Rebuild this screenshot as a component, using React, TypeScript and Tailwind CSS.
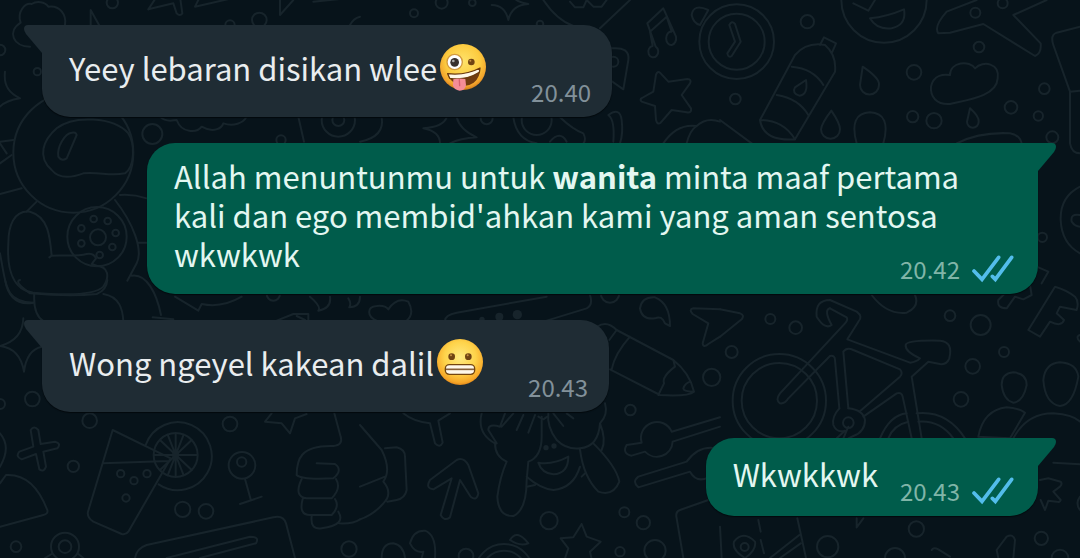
import type { ReactNode } from "react";

interface Message {
    id: number;
    text: ReactNode;
    time: string;
    outgoing?: boolean;
    multiline?: boolean;
    emoji?: "zany" | "grimace";
}

const messages: Message[] = [
    { id: 1, text: "Yeey lebaran disikan wlee", time: "20.40", emoji: "zany" },
    {
        id: 2,
        text: (
            <>
                Allah menuntunmu untuk <strong className="font-bold">wanita</strong> minta maaf pertama kali dan ego
                membid'ahkan kami yang aman sentosa wkwkwk
            </>
        ),
        time: "20.42",
        outgoing: true,
        multiline: true,
    },
    { id: 3, text: "Wong ngeyel kakean dalil", time: "20.43", emoji: "grimace" },
    { id: 4, text: "Wkwkkwk", time: "20.43", outgoing: true },
];

// Wallpaper is split in six tiles, each with its own origin
interface Tile {
    x: number;
    y: number;
    circles: [number, number, number][];
    paths: string[];
}

const tiles: Tile[] = [
    {
        x: 0,
        y: 0,
        circles: [
            [337, 8, 17], [778, 60, 22], [690, 75, 14], [0, 150, 16], [112, 215, 11], [220, 458, 180],
            [457, 402, 30], [1015, 360, 50], [1015, 360, 18], [843, 420, 14], [291, 710, 89], [294, 712, 24],
            [281, 657, 10], [323, 663, 10], [347, 699, 10], [337, 741, 10], [299, 765, 10], [244, 730, 10], [244, 685, 10],
        ],
        paths: [
            "M90 140C40 140 20 95 62 68C50 35 75 8 95 12C110 2 135 5 145 20C180 15 200 45 195 75",
            "M272 80V30L300 80M445 28L470-10M445 28L520 10L530 40Q540 50 547 40L540-10M600-10L585 20L695-5",
            "M840 0V45L880 0M940 5L1040-5M1050 75Q1060 55 1080 50M15 215C10 260 30 280 60 295C30 300 10 310 0 320",
            "M155 510C110 470 130 420 170 385C220 345 340 350 385 400C405 430 405 500 375 520C330 530 300 515 250 520C210 535 175 535 155 510Z",
            "M230 405L200 475Q185 485 175 470C170 440 195 400 215 398Q228 395 230 405Z",
            "M0 425L40 420M0 490L35 465M0 430L20 460M0 582L65 565",
            "M480 350C500 370 520 360 530 360C545 400 590 400 605 380C640 400 665 385 670 370C700 380 730 370 740 350M895 350L912 425",
            "M155 767C150 710 145 650 90 635C40 630 25 680 25 730C20 810 40 870 100 878C180 885 280 890 310 860C330 830 325 800 290 797L275 792L288 775Q280 758 260 762C230 770 190 765 155 767L148 772",
            "M110 605L80 635M345 600C400 670 430 750 410 790L382 842M360 585Q400 582 440 595M415 728H440M395 827C440 820 470 880 483 945M458 952L520 958",
            "M0 760C20 870 20 905 100 908M103 878C100 920 110 950 130 963M310 882C360 890 368 930 370 963",
        ],
    },
    {
        x: 1080,
        y: 0,
        circles: [[162, 40, 12], [245, 8, 18], [337, 8, 10], [540, 72, 10], [760, 185, 15], [380, 355, 18], [530, 360, 45]],
        paths: [
            "M395 15Q435 15 445 60Q455 15 505 12Q460 5 455-20M550 0Q590 60 640 78M810 0L720 85M630 5L645 22H670L680 0L700 20H725L740 0",
            "M910 25L862 70L887 140A15 17 0 1 1 878 138L870 95L920 50L935 95A15 20 0 1 0 948 110Z",
            "M1020 75L1045 30Q1000 10 995 45Q1000 70 1020 75M755 145Q810 140 805 180L790 268L750 240",
            "M900 218L925 245L982 237Q996 238 990 250L965 285L993 325Q996 340 980 337L935 330L902 368Q892 376 888 360L885 318L845 305Q838 298 846 294L880 275L888 224Q893 212 900 218Z",
            "M65 352Q75 410 0 425M190 385Q250 380 260 352M290 352Q300 390 350 412Q300 415 270 430M190 385Q240 395 240 430",
            "M460 352Q470 420 530 430M600 352Q640 390 670 400Q680 420 670 430M570 425Q600 390 620 425",
            "M745 345Q780 320 785 360Q790 400 780 430M745 345Q765 360 760 425M910 430Q950 370 1010 378Q1040 350 1080 365M980 430Q990 390 1010 378",
        ],
    },
    {
        x: 2160,
        y: 0,
        circles: [
            [50, 125, 112], [50, 125, 84], [262, 65, 20], [46, 297, 16], [582, 217, 22], [578, 350, 17], [642, 362, 23],
            [873, 322, 19], [973, 266, 16], [955, 348, 14], [997, 412, 18], [777, 141, 16], [766, 38, 15], [848, 10, 15],
            [967, 712, 14], [492, 0, 128],
        ],
        paths: [
            "M28 75Q35 60 45 72L62 125L35 168Q25 175 22 160L45 125Z",
            "M450 55Q500 50 552 28Q560 75 515 85Q470 90 450 55ZM400 10L445 32L465 0",
            "M120 360L225 165Q260 125 315 135Q350 165 345 215L225 418Q130 425 120 360Q190 360 225 418M300 135L312 112L348 130L335 160",
            "M215 200Q280 205 310 255M170 285Q235 295 265 345M258 240Q265 285 238 287Q215 280 225 262Z",
            "M428 200Q480 235 477 255A28 28 0 0 1 420 255ZM334 332Q360 370 360 388A28 28 0 0 1 303 388Q305 370 334 332ZM750 325Q778 350 776 365A17 18 0 0 1 741 365Z",
            "M410 430Q385 340 450 337Q515 340 490 430M0 360L95 430M710 430Q780 395 870 400Q900 405 905 430",
            "M690 225C690 185 750 180 765 205C790 180 840 190 833 235C830 290 740 300 690 312C650 315 630 290 633 260C640 225 670 222 690 225Z",
            "M770 0L680 35Q640 80 655 100L690 98L790 72L945 168Q965 160 962 130L880 45L980 0",
            "M1080 80L1010 98Q990 105 1000 135L1050 275V430Q1055 460 1080 460M1050 275L1080 272",
            "M1080 560Q1020 590 1022 660Q1025 730 1080 760M1080 645Q1050 640 1055 665Q1065 680 1080 680M950 800L985 815L965 850",
        ],
    },
    {
        x: 0,
        y: 840,
        circles: [
            [0, 372, 15], [97, 357, 22], [269, 422, 22], [220, 559, 17], [690, 432, 22], [527, 525, 66],
            [527, 525, 8], [362, 581, 11], [441, 581, 11], [402, 602, 11], [378, 654, 11], [726, 556, 40], [725, 546, 14],
            [548, 688, 23], [618, 694, 22], [48, 800, 16], [195, 800, 42], [195, 800, 19], [1047, 807, 23], [820, 42, 20],
        ],
        paths: [
            "M70 115Q68 180 0 198Q60 205 72 275Q80 210 125 200M92 450Q102 435 115 450L122 492L165 485Q185 490 172 505L130 515L138 560Q132 578 118 568L108 522L65 538Q45 530 58 515L100 500Z",
            "M0 460Q35 500 0 560M0 610L18 585Q100 580 142 690Q145 702 130 705L0 740",
            "M338 450L512 535L385 755Q378 765 365 762L280 725Q260 712 264 695ZM308 550L508 543M437 495A102 102 0 1 1 476 613",
            "M527 460V590M462 525H592M480 480L575 570M480 570L575 480M503 464L551 586M551 464L503 586",
            "M735 597L752 658M720 672L785 650M135 834L155 822M235 822L250 834",
            "M405 834Q410 805 440 795L820 712Q850 705 858 730L885 834M500 834L750 770Q780 770 768 790L600 834",
            "M795 425L815 400M795 425L845 430L870 460L885 415L920 402M1003 400L1022 470Q1030 495 1000 498C900 495 890 540 890 585Q905 600 1000 595Q1030 570 1005 552L950 550",
            "M905 597Q880 650 920 655H995Q1025 625 1008 597M908 657Q895 705 930 705H995Q1020 680 1005 657M935 708Q930 750 965 745Q1040 735 1015 695M1018 730Q1060 732 1080 718",
            "M525 50L595 92L605 72Q665 85 725 50M930 50Q965 80 955 92Q995 85 990 50M1045 55Q1055 70 1048 82Q1080 80 1080 50M830 122L880 102H925V122M890 108L915 120",
            "M60 0Q40 5 90 40Q210 50 290 42Q320 30 322 0M15 0Q30 80 100 68",
        ],
    },
    {
        x: 1080,
        y: 840,
        circles: [
            [750, 40, 28], [1055, 292, 26], [811, 390, 16], [567, 722, 26], [793, 697, 15], [850, 728, 20], [780, 815, 14],
            [885, 812, 32], [432, 880, 88], [432, 880, 68], [318, 828, 22],
        ],
        paths: [
            "M50 122C20 110 20 80 50 78Q75 75 85 88Q110 50 145 65Q165 100 140 122M255 122Q255 105 290 98L560 50M690 45Q700 75 680 85L560 122",
            "M930 138Q930 70 885 52Q845 50 840 85Q845 120 885 115Q905 105 915 130Z",
            "M1080 88L1000 85Q985 88 998 102L1045 130L1028 190Q1030 205 1045 192L1080 170",
            "M712 140Q740 120 770 150L940 240Q990 280 1002 335Q985 350 900 345L750 268M770 150L748 180M810 170Q765 220 755 268M940 240L945 260Q905 290 912 310L895 345M1000 335Q970 335 970 325Q975 310 990 305",
            "M800 495Q785 520 815 527L855 515A48 48 0 0 0 938 485L1080 440M800 495L845 488A48 48 0 0 1 935 455L1080 412",
            "M1080 508Q1020 490 980 545L835 590Q815 605 835 622L990 575Q1010 610 1045 592M1045 660L960 690Q945 695 950 715L970 834",
            "M0 435L65 510Q95 570 70 605Q100 640 70 670Q40 705 0 718M0 620L75 590M75 505L110 502Q135 508 135 530L140 630Q135 655 110 660L82 665",
            "M130 400Q160 425 210 430L225 490Q240 505 248 488L235 422L270 400",
            "M290 540L210 600Q195 625 220 628L275 595L242 705Q252 725 270 712L300 600L332 650Q350 665 355 640L325 555Q310 530 290 540Z",
            "M365 400Q350 460 405 490Q405 530 440 545Q420 590 412 650Q415 710 460 708Q500 690 500 600L505 545Q545 530 545 470V410M410 490L385 450Q385 430 420 440L435 400M425 440L460 400M470 450L490 405M505 458L525 405",
            "M565 400Q560 440 590 480Q620 510 660 505Q715 500 720 430Q745 405 735 370M720 430Q740 480 725 510M660 508Q670 590 715 635Q760 650 778 605Q770 560 700 490",
            "M535 548Q580 555 625 530Q625 580 580 583Q545 580 535 548ZM500 590Q540 625 580 630Q640 625 660 560M500 620L525 615M665 590L675 580M580 400L610 438M620 400L640 415M535 410L550 418L562 410",
            "M450 780Q470 745 505 790Q480 800 450 780M65 834Q65 790 100 790Q130 795 135 834M150 790Q160 750 195 752Q230 765 225 834M150 790Q165 820 190 815L185 834",
            "M665 732L680 770L722 785L690 815L700 860M665 732L640 772L602 775L625 805L610 850",
        ],
    },
    {
        x: 2160,
        y: 840,
        circles: [
            [151, 117, 15], [227, 143, 19], [35, 216, 18], [690, 107, 16], [782, 135, 30], [852, 216, 15], [758, 259, 22],
            [723, 358, 22], [178, 362, 140], [178, 362, 113], [385, 428, 16], [589, 747, 23],
            [323, 800, 32], [964, 775, 20], [74, 801, 12], [525, 834, 30], [1020, 834, 25],
        ],
        paths: [
            "M0 88L60 100Q75 105 65 118L0 170M455 45Q500 105 560 98Q600 80 585 45",
            "M330 85Q310 90 335 135Q315 150 290 110Q285 60 330 60L410 95Q430 110 415 125L382 178L570 248Q590 245 600 235Q555 215 557 195Q560 180 660 182Q700 185 688 235Q680 255 660 252L625 245L575 290L605 475",
            "M330 85L380 112Q385 120 375 130L180 340Q165 360 180 370Q195 372 205 355L330 228Q345 225 345 240L358 385M370 215L385 385M370 215Q380 200 400 210L540 268Q550 280 540 290L418 395M430 410L530 340Q545 335 548 350L575 475",
            "M358 385Q335 410 340 435Q350 460 375 452L350 475M385 385Q430 390 435 420Q435 455 400 468L385 475M385 440L370 475",
            "M480 475Q510 405 560 400M505 475Q520 435 565 425M590 400Q680 390 735 475M595 425Q660 420 700 475",
            "M1005 20Q1040 30 1065 50Q1078 65 1070 90L1020 80L1010 100L1032 120Q1025 142 990 125L960 170L925 150ZM895 0L835 60Q830 85 860 85L885 50L910 58L935 45L930 15M1080 165Q1065 170 1080 185",
            "M880 277Q920 280 920 315Q910 365 880 368Q850 360 845 315Q845 280 880 277ZM1020 247Q1070 250 1075 290Q1060 375 1020 378Q975 370 970 300Q975 250 1020 247Z",
            "M775 470Q790 390 860 382Q900 385 915 398L870 475ZM880 475Q920 400 1000 400Q1060 405 1080 425M1000 548L1080 553",
            "M960 600L985 595L1022 605Q1028 612 1020 620L1000 635L1022 660Q1020 668 1010 665L985 662L975 690L962 660M1080 650Q1065 670 1080 690",
            "M115 720L122 755M122 780L132 820M232 715L258 834M150 834L238 765M180 834L242 790M410 742V715M410 742L430 715M75 834Q35 810 42 785Q70 750 105 785Q110 810 75 834",
            "M635 810Q640 800 655 808L690 830M835 834L830 810L860 770Q880 760 885 780L880 834M0 740L5 834",
        ],
    },
];

function Wallpaper() {
    return (
        <svg
            aria-hidden="true"
            viewBox="0 0 3240 1674"
            preserveAspectRatio="xMidYMid slice"
            className="pointer-events-none absolute inset-0 h-full w-full fill-none stroke-[#17242b] stroke-6"
            strokeLinecap="round"
            strokeLinejoin="round"
        >
            {tiles.map((tile) => (
                <g key={`${tile.x}-${tile.y}`} transform={`translate(${tile.x} ${tile.y})`}>
                    {tile.circles.map(([cx, cy, r]) => (
                        <circle key={`${cx}-${cy}-${r}`} cx={cx} cy={cy} r={r} />
                    ))}
                    {tile.paths.map((d) => (
                        <path key={d} d={d} />
                    ))}
                </g>
            ))}
            <g className="fill-[#17242b]" stroke="none">
                <circle cx="1552" cy="944" r="14" />
                <circle cx="1498" cy="950" r="12" />
                <circle cx="1446" cy="958" r="8" />
                <circle cx="1638" cy="1343" r="8" />
                <circle cx="1662" cy="1338" r="8" />
            </g>
        </svg>
    );
}

function ZanyFace() {
    return (
        <svg role="img" aria-label="zany face" viewBox="0 0 144 144" className="ml-0.5 size-12 shrink-0">
            <defs>
                <radialGradient id="zany-skin" cx="0.5" cy="0.38" r="0.62">
                    <stop offset="0" stopColor="#ffe36b" />
                    <stop offset="0.6" stopColor="#fccb3f" />
                    <stop offset="0.88" stopColor="#f2a22b" />
                    <stop offset="1" stopColor="#cf7a1b" />
                </radialGradient>
            </defs>
            <circle cx="72" cy="72" r="69" fill="url(#zany-skin)" />
            <circle cx="47" cy="57" r="23" fill="#fff" stroke="#d39a3e" strokeWidth="4" />
            <circle cx="47" cy="58" r="13" fill="#38312f" />
            <circle cx="43" cy="54" r="4" fill="#aaa" />
            <circle cx="97" cy="57" r="10" fill="#704313" />
            <circle cx="94" cy="53" r="3" fill="#c79042" />
            <path d="M26 92Q80 98 123 75Q124 104 104 119Q75 139 46 119Q31 110 26 92Z" fill="#713b10" />
            <path d="M26 92Q80 98 123 75L121 88Q80 114 32 106Z" fill="#fff8ea" stroke="#6b3a0e" strokeWidth="4" strokeLinejoin="round" />
            <path d="M43 109Q60 104 79 108L81 126Q79 143 62 143Q45 142 42 127Z" fill="#f58d97" />
            <path d="M61 110L62 128" stroke="#d9606f" strokeWidth="4" strokeLinecap="round" />
        </svg>
    );
}

function GrimaceFace() {
    return (
        <svg role="img" aria-label="grimacing face" viewBox="0 0 144 144" className="ml-0.5 size-12 shrink-0">
            <defs>
                <radialGradient id="grimace-skin" cx="0.5" cy="0.4" r="0.62">
                    <stop offset="0" stopColor="#ffea82" />
                    <stop offset="0.55" stopColor="#fed34a" />
                    <stop offset="0.88" stopColor="#f7a728" />
                    <stop offset="1" stopColor="#d97e17" />
                </radialGradient>
            </defs>
            <circle cx="72" cy="72" r="69" fill="url(#grimace-skin)" />
            <circle cx="47" cy="56" r="10" fill="#704313" />
            <circle cx="97" cy="56" r="10" fill="#704313" />
            <circle cx="45" cy="52" r="3" fill="#c79042" />
            <circle cx="95" cy="52" r="3" fill="#c79042" />
            <rect x="28" y="80" width="88" height="29" rx="12" fill="#fff8ea" stroke="#74450f" strokeWidth="4" />
            <path d="M30 94H114" stroke="#87613b" strokeWidth="5" />
        </svg>
    );
}

function ReadTicks() {
    return (
        <svg
            role="img"
            aria-label="Read"
            viewBox="0 0 126 84"
            className="h-7 w-[42px] fill-none stroke-[#53bdeb] stroke-11"
            strokeLinecap="round"
            strokeLinejoin="miter"
        >
            <path d="M6 48L30 73L80 7M61 64L70 73L119 7" />
        </svg>
    );
}

function Tail({ outgoing }: { outgoing?: boolean }) {
    return (
        <svg
            aria-hidden="true"
            viewBox="0 0 20 28"
            className={`absolute top-0 h-7 w-5 ${outgoing ? "-right-[19px] fill-[#005c4b]" : "-left-[19px] -scale-x-100 fill-[#1f2c34]"}`}
        >
            <path d="M0 0H15Q19 0 19 4Q19 6 17 9L1 28H0Z" />
        </svg>
    );
}

function MessageBubble({ message }: { message: Message }) {
    const { text, time, outgoing, multiline, emoji } = message;

    return (
        <li
            className={`relative flex min-h-[78px] max-w-[891px] items-end rounded-[28px] pt-[13px] pb-[9px] pl-[27px] shadow-[0_1px_1px_#03090d] ${
                outgoing
                    ? "self-end rounded-tr-none bg-[#005c4b] pr-6 text-[#e3f7f1]"
                    : "self-start rounded-tl-none bg-[#1f2c34] pr-[21px] text-[#e9edef]"
            } ${multiline ? "flex-col" : ""}`}
        >
            <Tail outgoing={outgoing} />
            <div
                className={
                    emoji
                        ? "mb-3 flex min-h-[58px] items-center pr-11"
                        : multiline
                          ? "mb-3 self-start"
                          : "mb-3.5 pr-[22px]"
                }
            >
                <p>{text}</p>
                {emoji === "zany" && <ZanyFace />}
                {emoji === "grimace" && <GrimaceFace />}
            </div>
            {/* Time shares the last line of a long message */}
            <div
                className={`flex shrink-0 items-center gap-3 text-2xl leading-8 ${multiline ? "-mt-8" : ""} ${
                    outgoing ? "text-[#80b5a8]" : "text-[#82919a]"
                }`}
            >
                <time>{time}</time>
                {outgoing && <ReadTicks />}
            </div>
        </li>
    );
}

export default function App() {
    return (
        <main className="relative min-h-screen overflow-hidden bg-[#07131a] font-['Noto_Sans_CJK_SC',sans-serif] text-[31px] leading-[39px]">
            <Wallpaper />
            <ul className="relative flex flex-col gap-[26px] px-[42px] pt-[25px] pb-10">
                {messages.map((message) => (
                    <MessageBubble key={message.id} message={message} />
                ))}
            </ul>
        </main>
    );
}
